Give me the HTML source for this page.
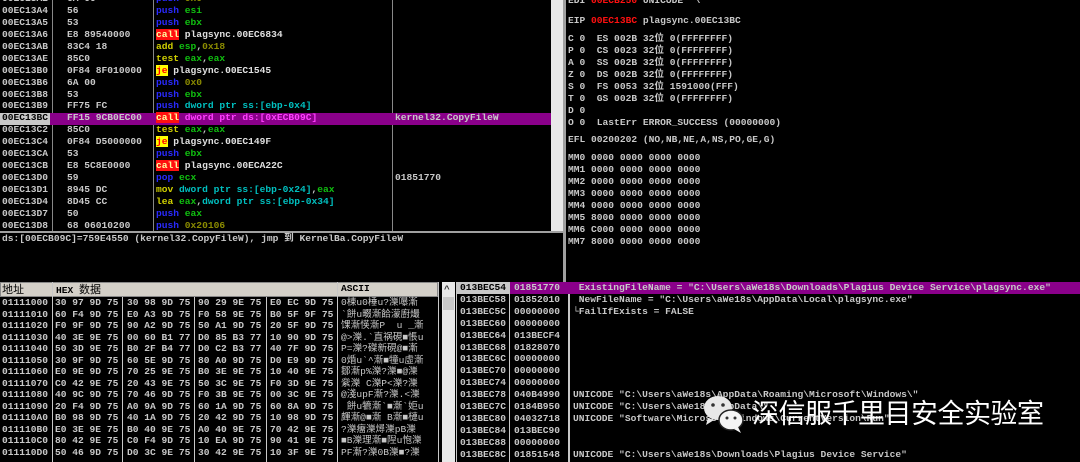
<!DOCTYPE html>
<html><head><meta charset="utf-8"><style>
*{margin:0;padding:0;box-sizing:border-box}
body{width:1080px;height:462px;background:#000;overflow:hidden;position:relative;font-family:"Liberation Mono","Noto Sans CJK SC",monospace;font-size:9.6px;font-weight:bold;color:#c8c8c8}
.r{position:absolute;height:12px;line-height:12px;white-space:pre}
.s{position:absolute;white-space:pre}
.v{position:absolute;background:#c8c8c8;width:1px}
.h{position:absolute;background:#c8c8c8;height:1px}
.b{color:#2a2aff}.g{color:#10c010}.o{color:#8a8a00}.y{color:#d0d000}.c{color:#00c0c0}.w{color:#e0e0e0}
.call{background:#ff1010;color:#ffffa0}.je{background:#ffff00;color:#ff0000}
.red{color:#ff1010}
</style></head><body>
<!-- disasm pane -->
<div class="v" style="left:52px;top:0;height:232px;background:#888"></div>
<div class="v" style="left:153px;top:0;height:232px;background:#888"></div>
<div class="v" style="left:392px;top:0;height:232px;background:#888"></div>
<div style="position:absolute;left:551px;top:0;width:12px;height:232px;background:#e8e8e8"></div>
<div style="position:absolute;left:563px;top:0;width:3px;height:282px;background:#a0a0a0"></div>
<div class="h" style="left:0;top:231px;width:563px;height:2px;background:#a0a0a0"></div>
<div style="position:absolute;left:0;top:113px;width:551px;height:12px;background:#8a008a"></div>
<div style="position:absolute;left:0;top:113px;width:50px;height:12px;background:#c8c8c8"></div>
<div id="dis"></div>
<div class="r" style="left:2px;top:233px">ds:[00ECB09C]=759E4550 (kernel32.CopyFileW), jmp 到 KernelBa.CopyFileW</div>
<!-- registers -->
<div id="reg"></div>
<!-- dump -->
<div style="position:absolute;left:0;top:282px;width:438px;height:15px;background:#d4d0c8;border:1px solid #888"></div>
<div class="r" style="left:2px;top:283px;color:#000;font-weight:normal;font-size:11px;font-family:'Noto Sans CJK SC',sans-serif">地址</div>
<div class="r" style="left:56px;top:283px;color:#000;font-size:9.6px">HEX <span style="font-family:'Noto Sans CJK SC';font-weight:normal;font-size:11px">数据</span></div>
<div class="r" style="left:341px;top:283px;color:#000">ASCII</div>
<div class="v" style="left:52px;top:282px;height:180px"></div>
<div class="v" style="left:122px;top:297px;height:165px"></div>
<div class="v" style="left:194px;top:297px;height:165px"></div>
<div class="v" style="left:266px;top:297px;height:165px"></div>
<div class="v" style="left:337px;top:282px;height:180px"></div>
<div class="v" style="left:438px;top:282px;height:180px"></div>
<div style="position:absolute;left:442px;top:282px;width:13px;height:180px;background:#e8e8e8"></div>
<div style="position:absolute;left:443px;top:297px;width:11px;height:13px;background:#c8c8c8"></div>
<div class="r" style="left:444px;top:284px;color:#333">^</div>
<div id="dump"></div>
<!-- stack -->
<div class="v" style="left:456px;top:282px;height:180px"></div>
<div class="v" style="left:509px;top:282px;height:180px"></div>
<div class="v" style="left:568px;top:282px;height:180px;width:2px"></div>
<div style="position:absolute;left:456px;top:282px;width:53px;height:12px;background:#c8c8c8"></div>
<div style="position:absolute;left:510px;top:282px;width:570px;height:12px;background:#8a008a"></div>
<div id="stk"></div>
<!-- watermark -->
<svg style="position:absolute;left:700px;top:394px" width="48" height="40" viewBox="0 0 48 40">
<ellipse cx="18" cy="14" rx="14" ry="12" fill="#e8e8e8"/>
<path d="M8 24 L6 31 L14 26 Z" fill="#e8e8e8"/>
<ellipse cx="31" cy="26" rx="12" ry="10" fill="#f4f4f4" stroke="#222" stroke-width="1.5"/>
<path d="M38 33 L41 39 L34 35 Z" fill="#f4f4f4"/>
<circle cx="13" cy="11" r="1.8" fill="#333"/><circle cx="23" cy="11" r="1.8" fill="#333"/>
<circle cx="27" cy="24" r="1.5" fill="#333"/><circle cx="35" cy="24" r="1.5" fill="#333"/>
</svg>
<div class="s" style="left:752px;top:394px;font-family:'Noto Sans CJK SC',sans-serif;font-weight:normal;font-size:27px;color:#fff;line-height:36px;letter-spacing:-0.5px">深信服千里目安全实验室</div>
<script>
function row(parent,y,cells){var d=document.getElementById(parent);cells.forEach(function(c){var e=document.createElement('div');e.className='r';e.style.left=c[0]+'px';e.style.top=(y-6)+'px';e.innerHTML=c[1];d.appendChild(e);});}
var D=[
["00EC13A2","6A 00",'<span class="b">push</span> <span class="o">0x0</span>'],
["00EC13A4","56",'<span class="b">push</span> <span class="g">esi</span>'],
["00EC13A5","53",'<span class="b">push</span> <span class="g">ebx</span>'],
["00EC13A6","E8 89540000",'<span class="call">call</span> <span class="w">plagsync.00EC6834</span>'],
["00EC13AB","83C4 18",'<span class="y">add</span> <span class="g">esp</span>,<span class="o">0x18</span>'],
["00EC13AE","85C0",'<span class="y">test</span> <span class="g">eax</span>,<span class="g">eax</span>'],
["00EC13B0","0F84 8F010000",'<span class="je">je</span> <span class="w">plagsync.00EC1545</span>'],
["00EC13B6","6A 00",'<span class="b">push</span> <span class="o">0x0</span>'],
["00EC13B8","53",'<span class="b">push</span> <span class="g">ebx</span>'],
["00EC13B9","FF75 FC",'<span class="b">push</span> <span class="c">dword ptr ss:[ebp-0x4]</span>'],
["00EC13BC","FF15 9CB0EC00",'<span class="call">call</span> <span style="color:#ff40ff">dword ptr ds:[0xECB09C]</span>',"kernel32.CopyFileW"],
["00EC13C2","85C0",'<span class="y">test</span> <span class="g">eax</span>,<span class="g">eax</span>'],
["00EC13C4","0F84 D5000000",'<span class="je">je</span> <span class="w">plagsync.00EC149F</span>'],
["00EC13CA","53",'<span class="b">push</span> <span class="g">ebx</span>'],
["00EC13CB","E8 5C8E0000",'<span class="call">call</span> <span class="w">plagsync.00ECA22C</span>'],
["00EC13D0","59",'<span class="b">pop</span> <span class="g">ecx</span>',"01851770"],
["00EC13D1","8945 DC",'<span class="y">mov</span> <span class="c">dword ptr ss:[ebp-0x24]</span>,<span class="g">eax</span>'],
["00EC13D4","8D45 CC",'<span class="y">lea</span> <span class="g">eax</span>,<span class="c">dword ptr ss:[ebp-0x34]</span>'],
["00EC13D7","50",'<span class="b">push</span> <span class="g">eax</span>'],
["00EC13D8","68 06010200",'<span class="b">push</span> <span class="o">0x20106</span>']];
D.forEach(function(r,i){var y=-1+i*11.94;var a=i==10?'<span style="color:#000">'+r[0]+'</span>':r[0];var c=[[2,a],[67,r[1]],[156,r[2]]];if(r[3])c.push([395,r[3]]);row('dis',y,c);});
var R=[[0,'EDI <span class="red">00ECB250</span> UNICODE "\\"'],[20,'EIP <span class="red">00EC13BC</span> plagsync.00EC13BC'],
[38,'C 0  ES 002B 32位 0(FFFFFFFF)'],[50,'P 0  CS 0023 32位 0(FFFFFFFF)'],[62,'A 0  SS 002B 32位 0(FFFFFFFF)'],[74,'Z 0  DS 002B 32位 0(FFFFFFFF)'],[86,'S 0  FS 0053 32位 1591000(FFF)'],[98,'T 0  GS 002B 32位 0(FFFFFFFF)'],[110,'D 0'],[122,'O 0  LastErr ERROR_SUCCESS (00000000)'],[139,'EFL 00200202 (NO,NB,NE,A,NS,PO,GE,G)']];
var mm=['0000','0000','0000','0000','0000','8000','C000','8000'];
mm.forEach(function(m,i){R.push([157+i*12,'MM'+i+' '+m+' 0000 0000 0000']);});
R.forEach(function(r){row('reg',r[0]+1,[[568,r[1]]]);});
var H=[["01111000","30 97 9D 75|30 98 9D 75|90 29 9E 75|E0 EC 9D 75","0棟u0棰u?濼嚗漸"],
["01111010","60 F4 9D 75|E0 A3 9D 75|F0 58 9E 75|B0 5F 9F 75","`餅u畷漸餄濛廚熶"],
["01111020","F0 9F 9D 75|90 A2 9D 75|50 A1 9D 75|20 5F 9D 75","馃漸愥漸P  u _漸"],
["01111030","40 3E 9E 75|00 60 B1 77|D0 85 B3 77|10 90 9D 75","@>濼.`直祸硯■悵u"],
["01111040","50 3D 9E 75|B0 2F B4 77|D0 C2 B3 77|40 7F 9D 75","P=濼?磔新硯@■漸"],
["01111050","30 9F 9D 75|60 5E 9D 75|80 A0 9D 75|D0 E9 9D 75","0焝u`^漸■犝u虛漸"],
["01111060","E0 9E 9D 75|70 25 9E 75|B0 3E 9E 75|10 40 9E 75","鄒漸p%濼?濼■@濼"],
["01111070","C0 42 9E 75|20 43 9E 75|50 3C 9E 75|F0 3D 9E 75","繠濼 C濼P<濼?濼"],
["01111080","40 9C 9D 75|70 46 9D 75|F0 3B 9E 75|00 3C 9E 75","@淺upF漸?濼.<濼"],
["01111090","20 F4 9D 75|A0 9A 9D 75|60 1A 9D 75|60 8A 9D 75"," 餅u犥漸`■漸`姖u"],
["011110A0","B0 98 9D 75|40 1A 9D 75|20 42 9D 75|10 98 9D 75","皹漸@■漸 B漸■槤u"],
["011110B0","E0 3E 9E 75|B0 40 9E 75|A0 40 9E 75|70 42 9E 75","?濼癅濼燖濼pB濼"],
["011110C0","80 42 9E 75|C0 F4 9D 75|10 EA 9D 75|90 41 9E 75","■B濼理漸■隉u怉濼"],
["011110D0","50 46 9D 75|D0 3C 9E 75|30 42 9E 75|10 3F 9E 75","PF漸?濼0B濼■?濼"]];
H.forEach(function(h,i){var y=303+i*11.5;var g=h[1].split('|');row('dump',y,[[2,h[0]],[55,g[0]],[127,g[1]],[198,g[2]],[270,g[3]],[341,'<span style="font-weight:normal">'+h[2]+'</span>']]);});
var S=[["013BEC54","01851770",' ExistingFileName = "C:\\Users\\aWe18s\\Downloads\\Plagius Device Service\\plagsync.exe"'],
["013BEC58","01852010",' NewFileName = "C:\\Users\\aWe18s\\AppData\\Local\\plagsync.exe"'],
["013BEC5C","00000000",'└FailIfExists = FALSE'],["013BEC60","00000000",''],["013BEC64","013BECF4",''],["013BEC68","01828070",''],["013BEC6C","00000000",''],["013BEC70","00000000",''],["013BEC74","00000000",''],
["013BEC78","040B4990",'UNICODE "C:\\Users\\aWe18s\\AppData\\Roaming\\Microsoft\\Windows\\"'],
["013BEC7C","0184B950",'UNICODE "C:\\Users\\aWe18s\\AppData\\"'],
["013BEC80","04032718",'UNICODE "Software\\Microsoft\\Windows\\CurrentVersion\\Run"'],
["013BEC84","013BEC90",''],["013BEC88","00000000",''],
["013BEC8C","01851548",'UNICODE "C:\\Users\\aWe18s\\Downloads\\Plagius Device Service"']];
S.forEach(function(s,i){var y=288+i*11.9;var a=i==0?'<span style="color:#000">'+s[0]+'</span>':s[0];row('stk',y,[[460,a],[514,s[1]],[573,s[2]]]);});
</script>
</body></html>
